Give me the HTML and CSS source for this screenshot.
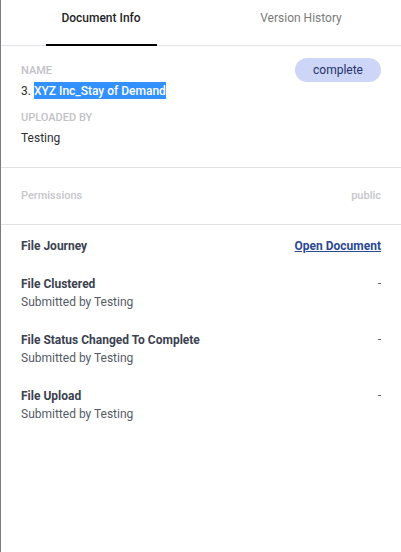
FILE: index.html
```html
<!DOCTYPE html>
<html>
<head>
<meta charset="utf-8">
<link rel="stylesheet" href="styles.css">
</head>
<body>
<div class="panel">
  <div class="tabs">
    <div class="tab active"><span>Document Info</span></div>
    <div class="tab"><span>Version History</span></div>
  </div>
  <div class="section info">
    <div class="row-top">
      <div class="field">
        <div class="label">NAME</div>
        <div class="value">3. <span class="sel">XYZ Inc_Stay of Demand</span></div>
      </div>
      <div class="badge">complete</div>
    </div>
    <div class="field second">
      <div class="label">UPLOADED BY</div>
      <div class="value">Testing</div>
    </div>
  </div>
  <div class="perm">
    <span>Permissions</span>
    <span>public</span>
  </div>
  <div class="journey">
    <div class="jhead">
      <span class="jtitle">File Journey</span>
      <a class="open" href="#">Open Document</a>
    </div>
    <div class="item">
      <div>
        <div class="ititle">File Clustered</div>
        <div class="isub">Submitted by Testing</div>
      </div>
      <div class="dash">-</div>
    </div>
    <div class="item">
      <div>
        <div class="ititle">File Status Changed To Complete</div>
        <div class="isub">Submitted by Testing</div>
      </div>
      <div class="dash">-</div>
    </div>
    <div class="item">
      <div>
        <div class="ititle">File Upload</div>
        <div class="isub">Submitted by Testing</div>
      </div>
      <div class="dash">-</div>
    </div>
  </div>
</div>
</body>
</html>
```
FILE: styles.css
```css
* { box-sizing: border-box; }
html, body { margin: 0; padding: 0; background: #fff; }
body {
  font-family: Roboto, "Liberation Sans", sans-serif;
  width: 401px;
  height: 552px;
  overflow: hidden;
}
.panel {
  height: 552px;
  border-left: 1px solid #7c7c7c;
  background: #fff;
}
.tabs {
  display: flex;
  height: 46px;
  border-bottom: 1px solid #e1e1e8;
}
.tab {
  flex: 1;
  display: flex;
  justify-content: center;
  align-items: stretch;
  font-size: 12px;
  line-height: 16px;
  color: #7a7a7a;
}
.tab span {
  display: block;
  text-align: center;
  padding: 10px 12px 0;
  margin-bottom: -1px;
}
.tab.active span {
  color: #1f1f1f;
  font-weight: 500;
  border-bottom: 2px solid #000;
  width: 111px;
}
.section.info {
  padding: 18px 20px 19px 20px;
  border-bottom: 1px solid #e1e1e6;
}
.row-top {
  display: flex;
  justify-content: space-between;
  align-items: flex-start;
}
.label {
  font-size: 11px;
  line-height: 14px;
  color: #c2c2c8;
  font-weight: 500;
}
.value {
  font-size: 12px;
  line-height: 20px;
  color: #303030;
  margin-top: 3px;
}
.sel {
  background: #3390ff;
  color: #fff;
  font-weight: 500;
  padding: 2px 0 1px;
}
.second { margin-top: 10px; }
.badge {
  margin-top: -6px;
  width: 86px;
  height: 24px;
  border-radius: 12px;
  background: #cdd6f6;
  color: #24326c;
  font-size: 12px;
  display: flex;
  align-items: center;
  justify-content: center;
}
.perm {
  display: flex;
  justify-content: space-between;
  align-items: center;
  height: 57px;
  padding: 0 20px 2px;
  border-bottom: 1px solid #e1e1e6;
  font-size: 11px;
  font-weight: 500;
  color: #c6c6cb;
}
.journey {
  padding: 11px 20px 0 20px;
}
.jhead {
  display: flex;
  justify-content: space-between;
  align-items: center;
  height: 20px;
  font-size: 12px;
  font-weight: 700;
}
.jtitle { color: #3b4250; }
.open {
  color: #2b4894;
  text-decoration: underline;
}
.item {
  display: flex;
  justify-content: space-between;
  margin-top: 20px;
  font-size: 12px;
}
.jhead + .item { margin-top: 19px; }
.ititle {
  font-weight: 700;
  color: #3b4250;
  line-height: 18px;
}
.isub {
  color: #555b66;
  line-height: 18px;
}
.dash {
  color: #555;
  line-height: 16px;
}
```
